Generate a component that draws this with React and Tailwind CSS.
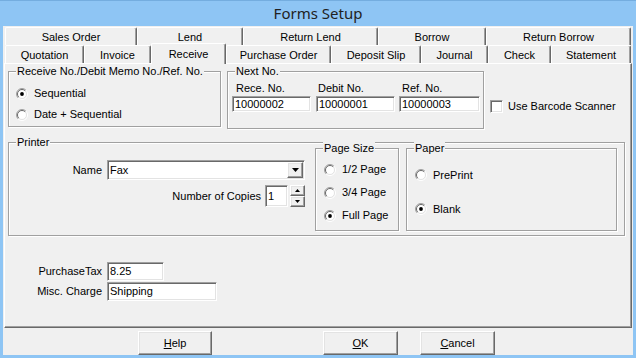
import React from "react";

const raised =
  "bg-[#f0f0f0] border border-t-white border-l-white border-r-[#696969] border-b-[#696969] shadow-[inset_-1px_-1px_0_#a0a0a0,inset_1px_1px_0_#e3e3e3]";
const sunken =
  "bg-white border border-t-[#a0a0a0] border-l-[#a0a0a0] border-r-white border-b-white shadow-[inset_1px_1px_0_#696969,inset_-1px_-1px_0_#e3e3e3]";
const etched = "border border-[#a0a0a0] shadow-[inset_1px_1px_0_#fff,1px_1px_0_#fff]";

const row1 = [
  ["Sales Order", "w-[132px]"],
  ["Lend", "w-[106px]"],
  ["Return Lend", "w-[135px]"],
  ["Borrow", "w-[108px]"],
  ["Return Borrow", "w-[145px]"],
];

const row2 = [
  ["Quotation", "w-[79px]"],
  ["Invoice", "w-[67px]"],
  ["Receive", "w-[75px]"],
  ["Purchase Order", "w-[105px]"],
  ["Deposit Slip", "w-[90px]"],
  ["Journal", "w-[67px]"],
  ["Check", "w-[63px]"],
  ["Statement", "w-[80px]"],
];

// classic sunken radio button
function Radio({ checked }) {
  return (
    <svg width="12" height="12" viewBox="0 0 12 12" className="shrink-0">
      <circle cx="6" cy="6" r="4.5" fill="#fff" />
      <path d="M2.1 9.9 A5.5 5.5 0 0 1 9.9 2.1" stroke="#a0a0a0" fill="none" />
      <path d="M9.9 2.1 A5.5 5.5 0 0 1 2.1 9.9" stroke="#fff" fill="none" />
      <path d="M2.8 9.2 A4.5 4.5 0 0 1 9.2 2.8" stroke="#696969" fill="none" />
      <path d="M9.2 2.8 A4.5 4.5 0 0 1 2.8 9.2" stroke="#e3e3e3" fill="none" />
      {checked && <circle cx="6" cy="6" r="1.9" fill="#000" />}
    </svg>
  );
}

function Option({ label, checked, className = "" }) {
  return (
    <div className={`flex items-center gap-[6px] ${className}`}>
      <Radio checked={checked} />
      <span>{label}</span>
    </div>
  );
}

function Group({ label, className = "", children }) {
  return (
    <div className={`relative ${etched} ${className}`}>
      <span className="absolute -top-[7px] left-[7px] px-[1px] bg-[#f0f0f0] leading-[13px]">{label}</span>
      {children}
    </div>
  );
}

function Field({ value, className = "" }) {
  return (
    <div className={`${sunken} flex items-center pl-[2px] ${className}`}>{value}</div>
  );
}

function Arrow({ w = 7, h = 4, up = false }) {
  return (
    <svg width={w} height={h} viewBox={`0 0 ${w} ${h}`}>
      <polygon points={up ? `${w / 2},0 ${w},${h} 0,${h}` : `0,0 ${w},0 ${w / 2},${h}`} fill="#000" />
    </svg>
  );
}

function Button({ children, className = "" }) {
  return (
    <div className={`${raised} h-[24px] flex items-center justify-center ${className}`}>{children}</div>
  );
}

export default function App() {
  return (
    <div className="w-[636px] h-[358px] bg-[#8ec5f4] border-t border-[#74addf] flex flex-col font-['Liberation_Sans',Arial,sans-serif] text-[11px] leading-[13px] text-black">
      {/* title bar */}
      <div className="h-[25px] flex items-center justify-center font-['Noto_Sans',sans-serif] text-[15px] text-[#222]">
        Forms Setup
      </div>

      <div className="flex-1 ml-[3px] mr-[3px] mb-[3px] bg-[#f0f0f0] flex flex-col">
        {/* tabs */}
        <div className="mt-[1px] pl-[2px] flex h-[18px]">
          {row1.map(([t, w]) => (
            <div
              key={t}
              className={`${w} h-[18px] border-t border-l border-white border-r border-r-[#696969] shadow-[inset_-1px_0_0_#a0a0a0] rounded-t-[2px] flex items-center justify-center pt-[1px]`}
            >
              {t}
            </div>
          ))}
        </div>
        <div className="pl-[2px] flex items-end h-[18px]">
          {row2.map(([t, w]) =>
            t === "Receive" ? (
              <div
                key={t}
                className={`${w} relative z-10 h-[21px] -mb-[1px] bg-[#f0f0f0] border-t border-l border-white border-r border-r-[#696969] shadow-[inset_-1px_0_0_#a0a0a0] rounded-t-[2px] flex items-start justify-center pt-[4px]`}
              >
                {t}
              </div>
            ) : (
              <div
                key={t}
                className={`${w} h-[18px] border-t border-l border-white border-r border-r-[#696969] shadow-[inset_-1px_0_0_#a0a0a0] rounded-t-[2px] flex items-center justify-center pt-[2px]`}
              >
                {t}
              </div>
            )
          )}
        </div>

        {/* panel */}
        <div className="mx-[1px] h-[265px] border border-t-white border-l-white border-r-[#696969] border-b-[#696969] shadow-[inset_-1px_-1px_0_#a0a0a0] flex flex-col">
          <div className="mt-[7px] ml-[3px] flex items-start">
            <Group label="Receive No./Debit Memo No./Ref. No." className="w-[213px] h-[56px] pt-[11px] pl-[7px]">
              <Option label="Sequential" checked className="h-[21px]" />
              <Option label="Date + Sequential" className="h-[21px]" />
            </Group>

            <Group label="Next No." className="ml-[6px] w-[257px] h-[58px] pt-[10px] pl-[4px] flex">
              <div className="w-[79px]">
                <div className="pl-[4px] h-[14px]">Rece. No.</div>
                <Field value="10000002" className="h-[16px]" />
              </div>
              <div className="w-[79px] ml-[5px]">
                <div className="pl-[2px] h-[14px]">Debit No.</div>
                <Field value="10000001" className="h-[16px]" />
              </div>
              <div className="w-[81px] ml-[4px]">
                <div className="pl-[3px] h-[14px]">Ref. No.</div>
                <Field value="10000003" className="h-[16px]" />
              </div>
            </Group>

            <div className="ml-[6px] mt-[29px] flex items-center gap-[5px]">
              <div className={`${sunken} w-[13px] h-[13px]`} />
              <span>Use Barcode Scanner</span>
            </div>
          </div>

          {/* printer */}
          <Group label="Printer" className="mt-[13px] ml-[3px] w-[617px] h-[94px] flex">
            <div className="w-[300px] flex flex-col items-end pr-[4px]">
              <div className="mt-[17px] flex items-center gap-[5px]">
                <span>Name</span>
                <div className={`${sunken} w-[198px] h-[20px] flex items-center justify-between pl-[2px] pr-[1px]`}>
                  <span>Fax</span>
                  <div className={`${raised} w-[16px] h-[16px] flex items-center justify-center`}>
                    <Arrow />
                  </div>
                </div>
              </div>
              <div className="mt-[5px] flex items-center">
                <span className="mr-[4px]">Number of Copies</span>
                <Field value="1" className="w-[23px] h-[22px]" />
                <div className="ml-[2px] flex flex-col">
                  <div className={`${raised} w-[15px] h-[11px] flex items-center justify-center`}>
                    <Arrow w={5} h={3} up />
                  </div>
                  <div className={`${raised} w-[15px] h-[11px] flex items-center justify-center`}>
                    <Arrow w={5} h={3} />
                  </div>
                </div>
              </div>
            </div>

            <Group label="Page Size" className="mt-[5px] ml-[6px] w-[84px] h-[83px] pt-[9px] pl-[8px]">
              <Option label="1/2 Page" className="h-[23px]" />
              <Option label="3/4 Page" className="h-[23px]" />
              <Option label="Full Page" checked className="h-[23px]" />
            </Group>

            <Group label="Paper" className="mt-[5px] ml-[7px] w-[211px] h-[83px] pt-[15px] pl-[8px]">
              <Option label="PrePrint" className="h-[22px]" />
              <Option label="Blank" checked className="mt-[12px] h-[22px]" />
            </Group>
          </Group>

          {/* tax / charge */}
          <div className="mt-[26px] flex flex-col gap-[1px]">
            <div className="flex items-center">
              <span className="w-[97px] text-right">PurchaseTax</span>
              <Field value="8.25" className="ml-[5px] w-[57px] h-[19px]" />
            </div>
            <div className="flex items-center">
              <span className="w-[97px] text-right">Misc. Charge</span>
              <Field value="Shipping" className="ml-[5px] w-[110px] h-[19px]" />
            </div>
          </div>
        </div>

        {/* buttons */}
        <div className="pt-[3px] flex">
          <Button className="ml-[135px] w-[74px]">
            <span><u>H</u>elp</span>
          </Button>
          <Button className="ml-[111px] w-[75px]">
            <span><u>O</u>K</span>
          </Button>
          <Button className="ml-[22px] w-[75px]">
            <span><u>C</u>ancel</span>
          </Button>
        </div>
      </div>
    </div>
  );
}
